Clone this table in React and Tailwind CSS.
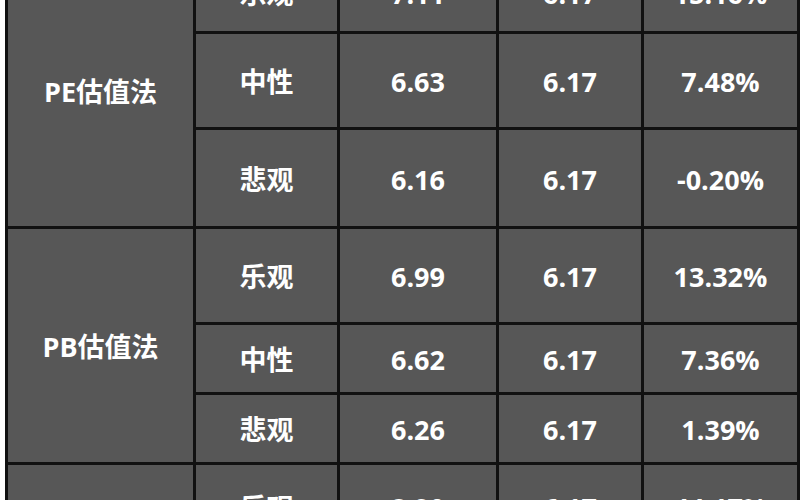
const groups = [
    {
        name: 'PE估值法',
        rows: [
            ['乐观', '7.11', '6.17', '15.16%', 'h-[77px]'],
            ['中性', '6.63', '6.17', '7.48%', 'h-[93px]'],
            ['悲观', '6.16', '6.17', '-0.20%', 'h-[96px]'],
        ],
    },
    {
        name: 'PB估值法',
        rows: [
            ['乐观', '6.99', '6.17', '13.32%', 'h-[93px]'],
            ['中性', '6.62', '6.17', '7.36%', 'h-[67px]'],
            ['悲观', '6.26', '6.17', '1.39%', 'h-[67px]'],
        ],
    },
    {
        name: '',
        rows: [['乐观', '8.90', '6.17', '44.17%', 'h-[83px]']],
    },
];

function Cell({ children, className = '' }) {
    return (
        <div className={`flex items-center justify-center bg-[#575757] pt-[4px] text-[27px] font-bold text-white ${className}`}>
            {children}
        </div>
    );
}

export default function App() {
    return (
        <div
            className="h-[500px] w-[800px] overflow-hidden bg-white pl-[5px]"
            style={{ fontFamily: '"Open Sans", "Noto Sans CJK SC", sans-serif' }}
        >
            <div className="-mt-[49px] grid grid-cols-[185px_141px_156px_142px_153px] gap-[3px] bg-[#111] p-[3px]">
                {groups.map((g) => (
                    <div key={g.name + g.rows.length} className="contents">
                        <Cell className={g.rows.length === 3 ? 'row-span-3' : ''}>{g.name}</Cell>
                        {g.rows.map(([label, value, price, pct, h]) => (
                            <div key={label + value} className="contents">
                                <Cell className={h}>{label}</Cell>
                                <Cell className={h}>{value}</Cell>
                                <Cell className={h}>{price}</Cell>
                                <Cell className={h}>{pct}</Cell>
                            </div>
                        ))}
                    </div>
                ))}
            </div>
        </div>
    );
}
